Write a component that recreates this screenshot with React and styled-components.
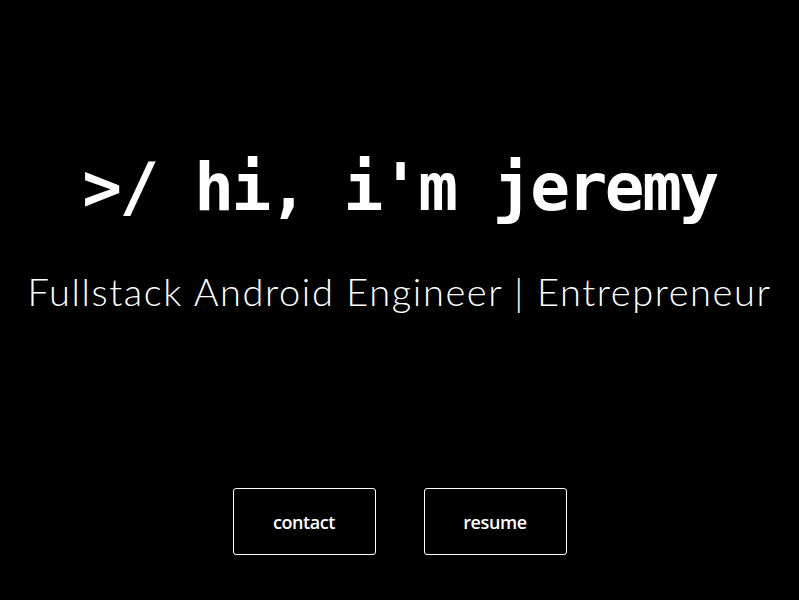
import React from "react";
import styled, { createGlobalStyle } from "styled-components";

const Global = createGlobalStyle`
  html, body { margin: 0; padding: 0; background: #000; }
  #root { min-height: 100vh; }
`;

const Page = styled.main`
  height: 600px;
  background: #000;
  color: #fff;
  display: flex;
  flex-direction: column;
  align-items: center;
  overflow: hidden;
`;

const Title = styled.h1`
  margin: 146px 0 0;
  font-family: "DejaVu Sans Mono", "Liberation Mono", monospace;
  font-weight: 700;
  font-size: 66px;
  letter-spacing: -2.4px;
  line-height: 84px;
  white-space: pre;
`;

const Subtitle = styled.p`
  margin: 36px 0 0;
  font-family: Lato, "Open Sans", sans-serif;
  font-weight: 300;
  font-size: 38px;
  letter-spacing: 1.6px;
  line-height: 50px;
  white-space: nowrap;
`;

const Actions = styled.div`
  margin-top: 172px;
  display: flex;
  gap: 48px;
`;

const Button = styled.a`
  box-sizing: border-box;
  width: 143px;
  height: 67px;
  border: 1px solid #fff;
  border-radius: 3px;
  display: flex;
  align-items: center;
  justify-content: center;
  color: #fff;
  text-decoration: none;
  font-family: "Open Sans", sans-serif;
  font-weight: 600;
  font-size: 18px;
  letter-spacing: -0.4px;
`;

export default function App() {
  return (
    <>
      <Global />
      <Page>
        <Title>{">/ hi, i'm jeremy"}</Title>
        <Subtitle>Fullstack Android Engineer | Entrepreneur</Subtitle>
        <Actions>
          <Button href="#contact">contact</Button>
          <Button href="#resume">resume</Button>
        </Actions>
      </Page>
    </>
  );
}
